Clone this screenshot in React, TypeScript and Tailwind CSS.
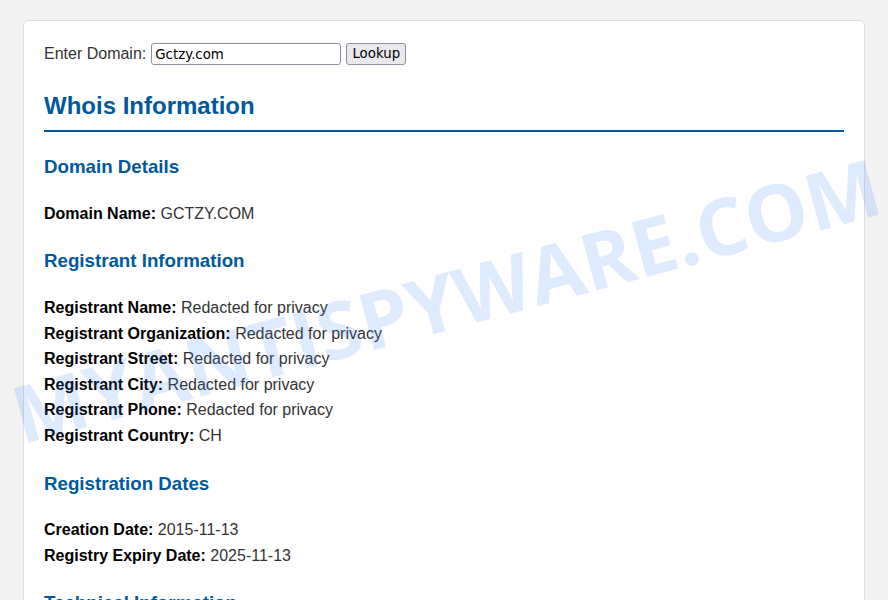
const rows: [string, string][][] = [
  [["Domain Name:", "GCTZY.COM"]],
  [
    ["Registrant Name:", "Redacted for privacy"],
    ["Registrant Organization:", "Redacted for privacy"],
    ["Registrant Street:", "Redacted for privacy"],
    ["Registrant City:", "Redacted for privacy"],
    ["Registrant Phone:", "Redacted for privacy"],
    ["Registrant Country:", "CH"],
  ],
  [
    ["Creation Date:", "2015-11-13"],
    ["Registry Expiry Date:", "2025-11-13"],
  ],
  [
    ["Name Server:", "NS1.GCTZY.COM"],
    ["Name Server:", "NS2.GCTZY.COM"],
  ],
];

const titles = ["Domain Details", "Registrant Information", "Registration Dates", "Technical Information"];

const Section = ({ title, items }: { title: string; items: [string, string][] }) => (
  <section>
    <h3 className="mt-6 mb-[22.5px] text-[18.72px] leading-[22px] font-bold text-[#00599c]">{title}</h3>
    {items.map(([k, v], i) => (
      <p key={i} className="leading-[25.6px]">
        <strong className="font-bold text-black">{k}</strong> {v}
      </p>
    ))}
  </section>
);

export default function App() {
  return (
    <div className="relative min-h-screen overflow-hidden bg-[#f3f3f3] px-[23px] pt-5 font-['Liberation_Sans',Arial,sans-serif] text-base text-[#333]">
      <div className="rounded-[5px] border border-[#dcdcdc] bg-white px-5 pt-[21px] pb-10">
        <div className="flex h-6 items-center">
          <span>Enter Domain:</span>
          <input
            defaultValue="Gctzy.com"
            className="ml-[5px] h-[22px] w-[190px] rounded-[3px] border border-[#8f8f9d] px-[3px] font-['DejaVu_Sans',sans-serif] text-[13.33px] text-black"
          />
          <button className="ml-[5px] h-[22px] w-[60px] rounded-[3px] border border-[#8f8f9d] bg-[#e9e9ed] font-['DejaVu_Sans',sans-serif] text-[13.33px] text-black">
            Lookup
          </button>
        </div>

        <h2 className="mt-[25.6px] border-b-2 border-[#00599c] pb-[10px] text-2xl leading-[28.8px] font-bold text-[#00599c]">
          Whois Information
        </h2>

        {titles.map((t, i) => (
          <Section key={t} title={t} items={rows[i]} />
        ))}
      </div>

      <div className="pointer-events-none absolute left-[446px] top-[300px] -translate-x-1/2 -translate-y-1/2 -rotate-[15deg] whitespace-nowrap font-['Open_Sans',sans-serif] text-[79px] font-bold text-[#3b82f6]/[0.17]">
        MYANTISPYWARE.COM
      </div>
    </div>
  );
}
